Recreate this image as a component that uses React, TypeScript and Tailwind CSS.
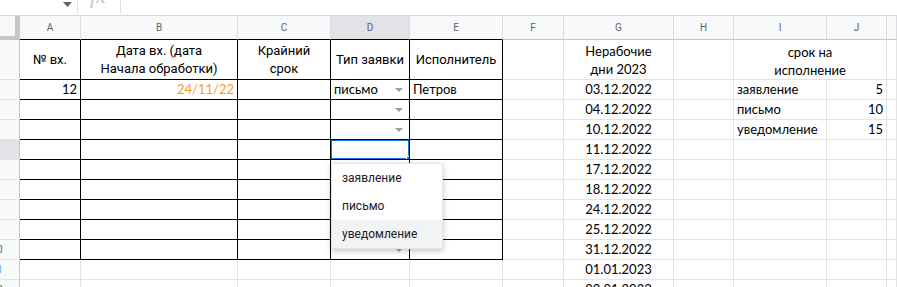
import clsx from "clsx";

const dates = [
    "03.12.2022",
    "04.12.2022",
    "10.12.2022",
    "11.12.2022",
    "17.12.2022",
    "18.12.2022",
    "24.12.2022",
    "25.12.2022",
    "31.12.2022",
    "01.01.2023",
    "02.01.2023",
];

const deadlines: Record<number, [string, string]> = {
    2: ["заявление", "5"],
    3: ["письмо", "10"],
    4: ["уведомление", "15"],
};

const letters = ["A", "B", "C", "D", "E", "F", "G", "H", "I", "J", ""];

const calibri = "font-['Lato','Open_Sans',sans-serif] text-[13px] text-black";

function Arrow() {
    return (
        <svg width="8" height="4" viewBox="0 0 8 4" className="shrink-0">
            <path d="M0 0h8L4 4z" fill="#9e9e9e" />
        </svg>
    );
}

function Cell({
    black,
    className,
    children,
}: {
    black?: boolean;
    className?: string;
    children?: React.ReactNode;
}) {
    return (
        <div
            className={clsx(
                "relative flex items-center overflow-hidden whitespace-nowrap border-r border-b",
                black ? "border-black" : "border-[#e2e3e3]",
                className
            )}
        >
            {children}
        </div>
    );
}

function RowHeader({ n }: { n: number }) {
    return (
        <div
            className={clsx(
                "flex items-center overflow-hidden border-r border-b border-r-[#c4c7c5] border-b-[#e2e3e3] text-[10px]",
                n === 5 ? "bg-[#e1e3e6]" : "bg-[#f8f9fa]",
                n === 11 ? "text-[#6b8fd6]" : "text-[#5f6368]"
            )}
        >
            <div className="w-[40px] -ml-[23px] shrink-0 text-center">{n}</div>
        </div>
    );
}

function DataRow({ r }: { r: number }) {
    const inTable = r <= 10;
    const hasArrow = r >= 2 && r <= 10 && r !== 5;
    const dl = deadlines[r];
    return (
        <>
            <RowHeader n={r} />
            <Cell black={inTable} className={clsx(calibri, "justify-end pr-[3px]")}>
                {r === 2 ? "12" : ""}
            </Cell>
            <Cell black={inTable} className="justify-end pr-[3px] font-['Lato','Open_Sans',sans-serif] text-[13px] text-[#f99d25]">
                {r === 2 ? "24/11/22" : ""}
            </Cell>
            <Cell black={inTable} />
            <Cell black={inTable} className={clsx(calibri, "justify-between pl-[3px] pr-[6px]")}>
                <span>{r === 2 ? "письмо" : ""}</span>
                {hasArrow && <Arrow />}
                {r === 5 && (
                    <div className="absolute -left-px -top-px w-[80px] h-[21px] border-2 border-[#1a73e8]">
                        <div className="absolute -right-[4px] -bottom-[4px] w-[6px] h-[6px] bg-[#1a73e8] border border-white" />
                    </div>
                )}
            </Cell>
            <Cell black={inTable} className={clsx(calibri, "pl-[3px]")}>
                {r === 2 ? "Петров" : ""}
            </Cell>
            <Cell />
            <Cell className={clsx(calibri, "justify-center")}>{dates[r - 2]}</Cell>
            <Cell />
            <Cell className={clsx(calibri, "pl-[3px]")}>{dl ? dl[0] : ""}</Cell>
            <Cell className={clsx(calibri, "justify-end pr-[3px]")}>{dl ? dl[1] : ""}</Cell>
            <Cell />
        </>
    );
}

export default function App() {
    const rows = [2, 3, 4, 5, 6, 7, 8, 9, 10, 11, 12];

    return (
        <div className="relative w-[897px] h-[287px] overflow-hidden bg-white font-['Roboto',sans-serif]">
            {/* formula bar, mostly scrolled away */}
            <div className="flex items-start h-[16px] border-b border-[#d6d8da] overflow-hidden">
                <div className="w-[63px] shrink-0" />
                <svg width="9" height="5" viewBox="0 0 9 5" className="mt-[2px] shrink-0">
                    <path d="M0 0h9L4.5 5z" fill="#5f6368" />
                </svg>
                <div className="ml-[5px] w-px h-[14px] bg-[#e0e0e0] shrink-0" />
                <span className="ml-[12px] -mt-[15px] w-[30px] shrink-0 font-['Liberation_Serif',serif] italic text-[22px] leading-[22px] text-[#c4c7c5]">
                    fx
                </span>
                <div className="w-px h-[14px] bg-[#e0e0e0] shrink-0" />
            </div>

            <div className="grid grid-cols-[20px_61px_157px_93px_79px_93px_61px_110px_60px_93px_60px_10px] grid-rows-[24px_40px_repeat(11,20px)]">
                {/* column headers */}
                <div className="bg-[#f8f9fa] border-r-[5px] border-b-[4px] border-[#c4c7c5]" />
                {letters.map((l, i) => (
                    <div
                        key={i}
                        className={clsx(
                            "flex items-center justify-center border-r border-b border-r-[#dadce0] text-[10px] text-[#5f6368]",
                            i === 3 ? "bg-[#e1e3e6]" : "bg-[#f8f9fa]",
                            i < 5 ? "border-b-black" : "border-b-[#c4c7c5]"
                        )}
                    >
                        {l}
                    </div>
                ))}

                {/* row 1: table headings */}
                <RowHeader n={1} />
                <Cell black className="justify-center text-center text-[13px] leading-[18px] text-black">
                    № вх.
                </Cell>
                <Cell black className="justify-center text-center text-[13px] leading-[18px] text-black">
                    Дата вх. (дата
                    <br />
                    Начала обработки)
                </Cell>
                <Cell black className="justify-center text-center text-[13px] leading-[18px] text-black">
                    Крайний
                    <br />
                    срок
                </Cell>
                <Cell black className="justify-center text-center text-[13px] leading-[18px] text-black">
                    Тип заявки
                </Cell>
                <Cell black className="justify-center text-center text-[13px] leading-[18px] text-black">
                    Исполнитель
                </Cell>
                <Cell />
                <Cell className={clsx(calibri, "justify-center text-center leading-[18px]")}>
                    Нерабочие
                    <br />
                    дни 2023
                </Cell>
                <Cell />
                <Cell className={clsx(calibri, "col-span-2 justify-center text-center leading-[18px] pt-[3px]")}>
                    срок на
                    <br />
                    исполнение
                </Cell>
                <Cell />

                {rows.map((r) => (
                    <DataRow key={r} r={r} />
                ))}
            </div>

            {/* validation dropdown */}
            <div className="absolute left-[331px] top-[163px] w-[112px] bg-white border border-[#e6e6e6] shadow-[0_2px_6px_rgba(60,64,67,0.3)] text-[12px] text-[#202124]">
                <div className="h-[28px] flex items-center pl-[10px]">заявление</div>
                <div className="h-[28px] flex items-center pl-[10px]">письмо</div>
                <div className="h-[28px] flex items-center pl-[10px] bg-[#f1f3f4]">уведомление</div>
            </div>
        </div>
    );
}
